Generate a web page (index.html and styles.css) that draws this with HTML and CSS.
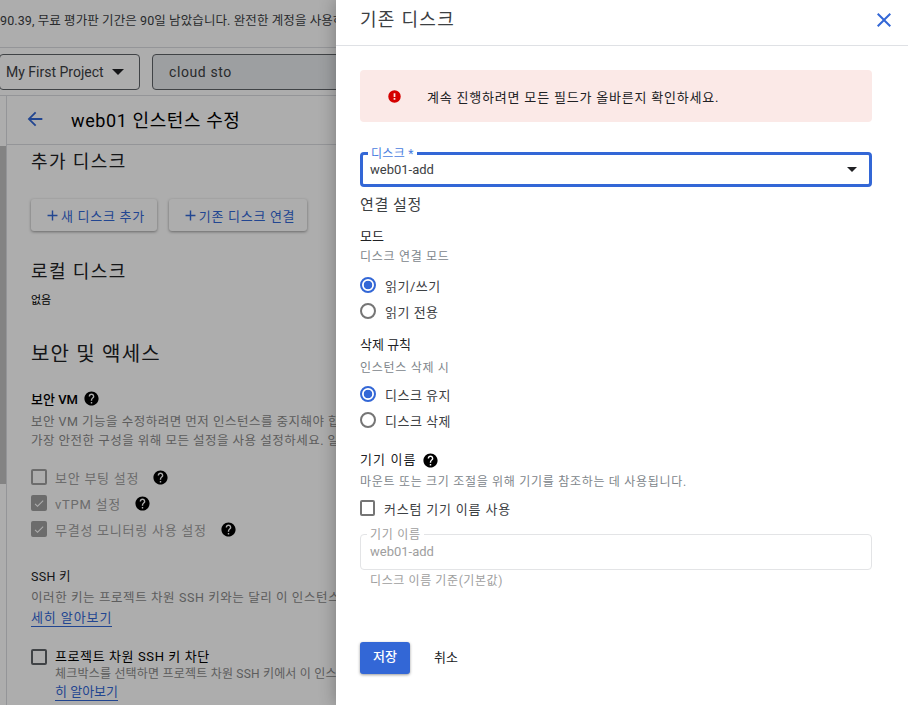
FILE: index.html
```html
<!DOCTYPE html>
<html lang="ko">
<head>
<meta charset="utf-8">
<title>기존 디스크</title>
<link rel="stylesheet" href="styles.css">
</head>
<body>
<svg class="defs" width="0" height="0" aria-hidden="true">
  <symbol id="help" viewBox="0 0 24 24"><path d="M12 2C6.48 2 2 6.48 2 12s4.48 10 10 10 10-4.48 10-10S17.52 2 12 2zm1 17h-2v-2h2v2zm2.07-7.75l-.9.92C13.45 12.9 13 13.5 13 15h-2v-.5c0-1.1.45-2.1 1.17-2.83l1.24-1.26c.37-.36.59-.86.59-1.41 0-1.1-.9-2-2-2s-2 .9-2 2H8c0-2.21 1.79-4 4-4s4 1.79 4 4c0 .88-.36 1.68-.93 2.25z"/></symbol>
  <symbol id="check" viewBox="0 0 24 24"><path d="M9 16.2 4.8 12l-1.4 1.4L9 19 21 7l-1.4-1.4z"/></symbol>
  <symbol id="plus" viewBox="0 0 24 24"><path d="M19 13h-6v6h-2v-6H5v-2h6V5h2v6h6z"/></symbol>
</svg>

<div class="page">
  <div class="notice">90.39, 무료 평가판 기간은 90일 남았습니다. 완전한 계정을 사용하려면 업그레이드하세요.</div>
  <div class="toolbar">
    <div class="project"><span>My First Project</span><i class="caret caret-dim"></i></div>
    <div class="search">cloud sto</div>
  </div>
  <div class="main">
    <div class="rail"><div class="thumb"></div></div>
    <div class="content">
      <div class="pagehead">
        <svg class="back" viewBox="0 0 24 24"><path d="M20 11H7.83l5.59-5.59L12 4l-8 8 8 8 1.41-1.41L7.83 13H20z"/></svg>
        <h1>web01 인스턴스 수정</h1>
      </div>
      <div class="scroll">
        <h2 class="h-add">추가 디스크</h2>
        <div class="actions">
          <div class="raised"><svg class="plusicon"><use href="#plus"/></svg>새 디스크 추가</div>
          <div class="raised"><svg class="plusicon"><use href="#plus"/></svg>기존 디스크 연결</div>
        </div>
        <h2 class="h-local">로컬 디스크</h2>
        <p class="none">없음</p>
        <h2 class="h-sec">보안 및 액세스</h2>
        <div class="vm-title">보안 VM <svg class="help"><use href="#help"/></svg></div>
        <p class="muted vm-desc">보안 VM 기능을 수정하려면 먼저 인스턴스를 중지해야 합니다. 자세히 알아보기<br>가장 안전한 구성을 위해 모든 설정을 사용 설정하세요. 일부 설정은 변경할 수 없습니다</p>
        <div class="opts">
          <div class="opt"><span class="box box-dim"></span><span class="opt-text">보안 부팅 설정</span><svg class="help help-gap"><use href="#help"/></svg></div>
          <div class="opt"><span class="box box-on"><svg class="tick"><use href="#check"/></svg></span><span class="opt-text">vTPM 설정</span><svg class="help help-gap"><use href="#help"/></svg></div>
          <div class="opt"><span class="box box-on"><svg class="tick"><use href="#check"/></svg></span><span class="opt-text">무결성 모니터링 사용 설정</span><svg class="help help-gap"><use href="#help"/></svg></div>
        </div>
        <div class="ssh-title">SSH 키</div>
        <p class="muted ssh-desc">이러한 키는 프로젝트 차원 SSH 키와는 달리 이 인스턴스에만 적용됩니다. 자세히 알아보기</p>
        <a class="link link-wide">세히 알아보기</a>
        <div class="block">
          <span class="box box-dark"></span>
          <div>
            <div class="block-title">프로젝트 차원 SSH 키 차단</div>
            <div class="muted block-desc">체크박스를 선택하면 프로젝트 차원 SSH 키에서 이 인스턴스로의 액세스가 차단됩니다. 자세</div>
            <a class="link">히 알아보기</a>
          </div>
        </div>
      </div>
    </div>
  </div>
</div>

<div class="scrim"></div>

<aside class="drawer">
  <header class="dhead">
    <div class="dtitle">기존 디스크</div>
    <svg class="close" viewBox="0 0 24 24"><path d="M19 6.41 17.59 5 12 10.59 6.41 5 5 6.41 10.59 12 5 17.59 6.41 19 12 13.41 17.59 19 19 17.59 13.41 12z"/></svg>
  </header>
  <div class="dbody">
    <div class="alert">
      <svg class="alert-icon" viewBox="0 0 24 24"><path d="M12 2a10 10 0 1 0 0 20 10 10 0 0 0 0-20zm1.4 15h-2.8v-2.6h2.8zm0-4.4h-2.8V6.6h2.8z"/></svg>
      <span>계속 진행하려면 모든 필드가 올바른지 확인하세요.</span>
    </div>
    <div class="field field-on">
      <span class="legend legend-on">디스크 *</span>
      <span>web01-add</span>
      <i class="caret caret-small"></i>
    </div>
    <div class="section">연결 설정</div>
    <div class="label l-mode">모드</div>
    <div class="hint h-mode">디스크 연결 모드</div>
    <div class="radios r-mode">
      <div class="radio"><span class="dot dot-on"></span>읽기/쓰기</div>
      <div class="radio"><span class="dot"></span>읽기 전용</div>
    </div>
    <div class="label l-del">삭제 규칙</div>
    <div class="hint h-del">인스턴스 삭제 시</div>
    <div class="radios r-del">
      <div class="radio"><span class="dot dot-on"></span>디스크 유지</div>
      <div class="radio"><span class="dot"></span>디스크 삭제</div>
    </div>
    <div class="label l-dev"><span class="dev-name">기기 이름</span><svg class="help"><use href="#help"/></svg></div>
    <div class="hint h-dev">마운트 또는 크기 조절을 위해 기기를 참조하는 데 사용됩니다.</div>
    <div class="custom"><span class="box box-gray"></span>커스텀 기기 이름 사용</div>
    <div class="field field-off">
      <span class="legend legend-off">기기 이름</span>
      <span>web01-add</span>
    </div>
    <div class="hint subhint">디스크 이름 기준(기본값)</div>
    <div class="buttons">
      <div class="save">저장</div>
      <div class="cancel">취소</div>
    </div>
  </div>
</aside>
</body>
</html>
```
FILE: styles.css
```css
* { box-sizing: border-box; }
html, body { margin: 0; height: 100%; }
body {
  width: 908px;
  height: 705px;
  overflow: hidden;
  position: relative;
  background: #fff;
  color: #202124;
  font-family: Roboto, "Noto Sans CJK KR", sans-serif;
  font-size: 13px;
}
.defs { position: absolute; }
h1, h2, p { margin: 0; font-weight: 400; }

/* page behind the drawer */
.page { width: 908px; height: 705px; overflow: hidden; display: flex; flex-direction: column; }
.notice {
  height: 48px;
  flex: none;
  padding: 12px 0 0;
  border-bottom: 1px solid #dadce0;
  color: #3c4043;
  font-size: 12.5px;
  letter-spacing: .1px;
  line-height: 18px;
  white-space: nowrap;
}
.toolbar { height: 48px; flex: none; display: flex; gap: 12px; padding-top: 6px; border-bottom: 1px solid #dadce0; }
.project {
  width: 141px;
  height: 36px;
  margin-left: -1px;
  display: flex;
  align-items: center;
  gap: 8px;
  padding-left: 6px;
  border: 1px solid #5f6368;
  border-radius: 4px;
  font-size: 14px;
  color: #3c4043;
}
.search {
  width: 600px;
  height: 36px;
  padding-left: 16px;
  border: 1px solid #5f6368;
  border-radius: 4px;
  background: #e8eaed;
  font-size: 14px;
  letter-spacing: .6px;
  line-height: 35px;
  color: #3c4043;
}
.caret { display: block; width: 0; height: 0; border-left: 6px solid transparent; border-right: 6px solid transparent; border-top: 6px solid #202124; }
.caret-small { border-left-width: 5px; border-right-width: 5px; border-top-width: 5px; }
.main { flex: 1; display: flex; min-height: 0; }
.rail { width: 7px; flex: none; border-right: 1px solid #dadce0; padding-top: 50px; }
.thumb { width: 6px; height: 338px; background: #c1c1c1; }
.content { flex: 1; min-width: 0; }
.pagehead { height: 49px; display: flex; align-items: center; padding: 0 0 3px 17px; border-bottom: 1px solid #dadce0; }
.back { width: 22px; height: 22px; fill: #3367d6; }
.pagehead h1 { margin-left: 25px; font-size: 18px; letter-spacing: .6px; color: #000; }
.scroll { padding-left: 24px; color: #000; }
.scroll h2 { font-size: 18px; line-height: 24px; letter-spacing: 1.4px; color: #202124; }
.h-add { padding-top: 5px; }
.actions { display: flex; gap: 12px; margin-top: 25px; }
.raised {
  height: 32px;
  display: flex;
  align-items: center;
  padding: 0 12px 0 13px;
  border-radius: 3px;
  background: #fff;
  box-shadow: 0 1px 3px rgba(0,0,0,.4);
  color: #3367d6;
  font-size: 13px;
  letter-spacing: .7px;
  white-space: nowrap;
}
.plusicon { width: 17px; height: 17px; fill: #3367d6; }
.h-local { margin-top: 29px; }
.none { margin-top: 9px; font-size: 11px; line-height: 16px; }
.scroll .h-sec { margin-top: 31px; font-size: 20px; line-height: 28px; letter-spacing: 1.2px; }
.vm-title { display: flex; align-items: center; gap: 5px; margin-top: 22px; height: 16px; font-size: 13px; font-weight: 500; }
.help { width: 17px; height: 17px; flex: none; fill: #000; }
.muted { color: #8a8a8a; }
.opt-text { color: #a0a0a0; letter-spacing: .75px; }
.vm-desc { margin-top: 6px; font-size: 12.5px; letter-spacing: .5px; line-height: 19px; white-space: nowrap; }
.opts { margin-top: 18px; display: flex; flex-direction: column; gap: 8px; font-size: 13px; }
.opt { display: flex; align-items: center; height: 18px; white-space: nowrap; }
.help-gap { margin-left: 13px; }
.box { display: inline-flex; flex: none; align-items: center; justify-content: center; width: 16px; height: 16px; margin-right: 8px; border: 2px solid #757575; border-radius: 2px; }
.box-dim { border-color: #a0a0a0; }
.box-on { border-color: #a0a0a0; background: #a0a0a0; }
.box-dark { border-color: #5f6368; }
.tick { width: 13px; height: 13px; fill: #fff; }
.ssh-title { margin-top: 30px; font-size: 12.5px; letter-spacing: .3px; line-height: 18px; color: #202124; }
.ssh-desc { margin-top: 2px; font-size: 12.5px; letter-spacing: .6px; line-height: 19px; white-space: nowrap; }
.link { display: inline-block; color: #3367d6; font-size: 13px; line-height: 17px; border-bottom: 1px solid #3367d6; white-space: nowrap; }
.link-wide { margin-top: 2px; letter-spacing: .9px; }
.block { display: flex; margin-top: 21px; white-space: nowrap; }
.block .box { margin-top: 1px; }
.block-title { font-size: 13px; letter-spacing: .6px; line-height: 18px; color: #000; }
.block-desc { font-size: 12px; letter-spacing: .2px; line-height: 17px; }

.scrim { position: absolute; inset: 0; background: rgba(0,0,0,.32); }

/* drawer */
.drawer {
  position: absolute;
  top: 0; right: 0; bottom: 0;
  width: 572px;
  background: #fff;
  box-shadow: 0 0 16px rgba(0,0,0,.3);
}
.dhead { height: 46px; display: flex; align-items: center; justify-content: space-between; padding: 0 12px 5px 24px; border-bottom: 1px solid #dfe1e5; }
.dtitle { font-size: 18px; line-height: 24px; color: #3c4043; letter-spacing: 1.3px; }
.close { width: 24px; height: 24px; fill: #3367d6; }
.dbody { padding: 24px 36px 0 24px; }
.alert { height: 52px; display: flex; align-items: center; border-radius: 4px; background: #fbe9e7; font-size: 13px; letter-spacing: .8px; color: #202124; padding-left: 27px; }
.alert-icon { width: 15px; height: 15px; fill: #d50000; margin-right: 25px; }
.field { position: relative; display: flex; align-items: center; justify-content: space-between; padding: 0 18px 0 9px; border-radius: 4px; font-size: 13px; }
.field-on { height: 35px; margin-top: 30px; border: 3px solid #3367d6; padding-left: 7px; padding-right: 12px; color: #3c4043; }
.legend { position: absolute; top: -7px; padding: 0 3px; background: #fff; font-size: 12px; line-height: 14px; }
.legend-on { top: -8px; left: 5px; color: #4a7de0; letter-spacing: .3px; }
.section { margin-top: 8px; font-size: 15px; letter-spacing: .6px; line-height: 20px; color: #3c4043; }
.label { font-size: 13px; line-height: 18px; color: #202124; display: flex; align-items: center; gap: 5px; }
.dev-name { letter-spacing: 1.1px; }
.hint { font-size: 12px; letter-spacing: .7px; line-height: 18px; color: #80868b; white-space: nowrap; }
.l-mode { margin-top: 13px; }
.h-mode { margin-top: 2px; }
.radios { display: flex; flex-direction: column; gap: 8px; }
.r-mode { margin-top: 10px; }
.radio { display: flex; align-items: center; height: 18px; font-size: 13px; letter-spacing: .5px; color: #3c4043; }
.dot { width: 16px; height: 16px; margin-right: 9px; border: 2px solid #757575; border-radius: 50%; flex: none; }
.dot-on { border-color: #3367d6; background: radial-gradient(circle, #3367d6 0 4px, #fff 4.6px); }
.l-del { margin-top: 16px; }
.h-del { margin-top: 5px; }
.r-del { margin-top: 8px; }
.l-dev { margin-top: 22px; }
.h-dev { margin-top: 4px; }
.custom { display: flex; align-items: center; height: 18px; margin-top: 8px; font-size: 13px; letter-spacing: .8px; color: #3c4043; }
.box-gray { width: 15px; height: 16px; margin-right: 9px; }
.field-off { height: 36px; margin-top: 17px; padding-bottom: 1px; border: 1px solid #e3e4e6; color: #9e9e9e; }
.legend-off { left: 6px; color: #9e9e9e; letter-spacing: .7px; }
.subhint { margin-top: 2px; padding-left: 10px; letter-spacing: .6px; color: #9e9e9e; }
.buttons { display: flex; align-items: center; margin-top: 52px; }
.save { width: 50px; height: 32px; border-radius: 3px; background: #3367d6; box-shadow: 0 1px 3px rgba(0,0,0,.4); color: #fff; font-size: 13px; font-weight: 500; line-height: 30px; text-align: center; }
.cancel { margin-left: 24px; margin-bottom: 3px; font-size: 13px; color: #202124; }
```
